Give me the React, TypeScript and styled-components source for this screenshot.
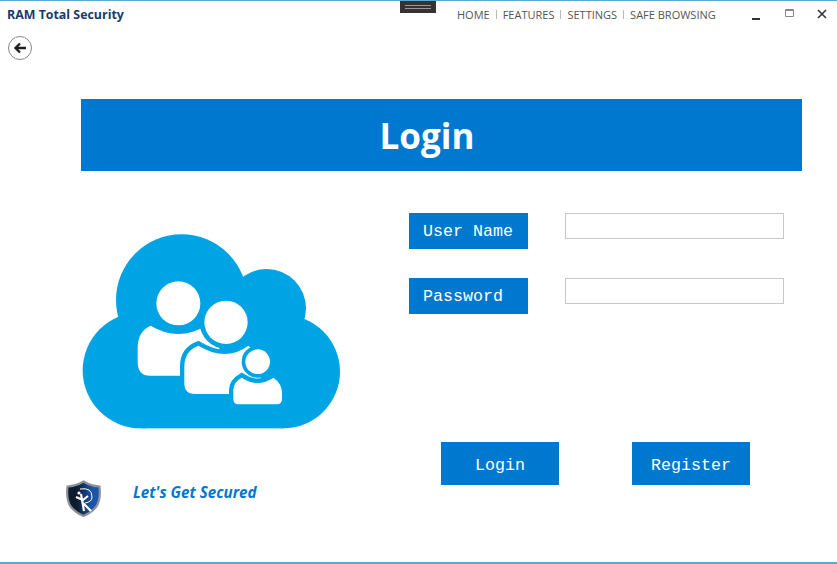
import React from 'react'
import styled, { createGlobalStyle } from 'styled-components'

const GlobalStyle = createGlobalStyle`
html, body {
  margin: 0;
  padding: 0;
  background: #fff;
}
`

const blue = '#0078cf'
const cloudBlue = '#00a4e4'

const Frame = styled.div`
  position: relative;
  box-sizing: border-box;
  width: 837px;
  height: 564px;
  overflow: hidden;
  background: #fff;
  border-top: 1px solid #5aa9d4;
  border-bottom: 2px solid #5aa9d4;
  font-family: "Open Sans", "Liberation Sans", sans-serif;
`

const TitleBar = styled.div`
  display: flex;
  align-items: center;
  height: 27px;
  padding-left: 7px;
`

const AppName = styled.div`
  width: 450px;
  font-size: 12.4px;
  font-weight: 700;
  color: #1a3a6b;
`

const Nav = styled.nav`
  display: flex;
  align-items: center;
  width: 285px;
  margin-top: -1px;
  font-size: 11px;
  color: #555;
`

const NavItem = styled.span`
  white-space: nowrap;
`

const NavSep = styled.span`
  width: 1px;
  height: 9px;
  margin: 0 6px;
  background: #bbb;
`

const WindowButtons = styled.div`
  display: flex;
  align-items: center;
  gap: 20px;
  margin-top: -2px;
  padding-left: 8px;
`

const GripHandle = styled.div`
  position: absolute;
  top: 0;
  left: 400px;
  width: 36px;
  height: 12px;
  background: #333;
  display: flex;
  align-items: center;
  justify-content: center;
  &::before {
    content: '';
    width: 26px;
    height: 2px;
    border-top: 1px solid #999;
    border-bottom: 1px solid #999;
  }
`

const BackRow = styled.div`
  box-sizing: border-box;
  height: 71px;
  padding: 8px 0 0 8px;
`

const BackButton = styled.button`
  display: flex;
  align-items: center;
  justify-content: center;
  box-sizing: border-box;
  width: 24px;
  height: 24px;
  padding: 0;
  border: 1px solid #888;
  border-radius: 50%;
  background: #fff;
`

const Banner = styled.h1`
  box-sizing: border-box;
  width: 721px;
  height: 72px;
  margin: 0 0 0 81px;
  padding-right: 29px;
  background: ${blue};
  color: #fff;
  font-size: 35px;
  font-weight: 700;
  line-height: 73px;
  text-align: center;
`

const Body = styled.div`
  display: flex;
`

const LeftColumn = styled.div`
  width: 409px;
  padding-top: 54px;
`

const CloudWrap = styled.div`
  padding-left: 70px;
  height: 210px;
`

const Tagline = styled.div`
  display: flex;
  align-items: center;
  gap: 31px;
  margin-top: 45px;
  padding-left: 65px;
`

const TaglineText = styled.span`
  padding-bottom: 14px;
  color: ${blue};
  font-size: 15.2px;
  font-weight: 700;
  font-style: italic;
`

const FormColumn = styled.div`
  flex: 1;
  padding-top: 42px;
`

const FieldRow = styled.div`
  display: flex;
  gap: 37px;
  margin-bottom: 29px;
`

const FieldLabel = styled.label`
  box-sizing: border-box;
  width: 119px;
  height: 36px;
  padding-left: 14px;
  background: ${blue};
  color: #fff;
  font-family: "Liberation Mono", monospace;
  font-size: 16.67px;
  line-height: 38px;
`

const TextBox = styled.input`
  box-sizing: border-box;
  width: 219px;
  height: 26px;
  border: 1px solid #c8c8c8;
  background: #fff;
  outline: none;
`

const Actions = styled.div`
  display: flex;
  gap: 73px;
  margin-top: 128px;
  padding-left: 32px;
`

const ActionButton = styled.button`
  width: 118px;
  height: 43px;
  padding: 4px 0 0;
  border: none;
  background: ${blue};
  color: #fff;
  font-family: "Liberation Mono", monospace;
  font-size: 16.67px;
`

const CloudArt = () => (
  <svg width="280" height="210" viewBox="0 0 840 630">
    <g fill={cloudBlue}>
      <circle cx="335" cy="225" r="197" />
      <circle cx="590" cy="250" r="118" />
      <circle cx="640" cy="440" r="170" />
      <circle cx="212" cy="436" r="174" />
      <rect x="212" y="300" width="430" height="310" />
    </g>
    <g fill="#fff" stroke={cloudBlue} paintOrder="stroke">
      <path strokeWidth="0" d="M242 302 Q325 352 408 302 Q450 320 450 400 L450 452 L240 452 Q203 452 203 410 L203 370 Q203 318 242 302 Z" />
      <circle cx="325" cy="235" r="66" strokeWidth="28" />
      <path strokeWidth="26" d="M385 362 Q468 412 535 362 Q572 390 572 440 L572 507 L375 507 Q343 507 343 475 L343 425 Q343 378 385 362 Z" />
      <circle cx="468" cy="292" r="65" strokeWidth="28" />
      <path strokeWidth="26" d="M515 458 Q563 490 610 458 Q636 475 636 505 L636 522 Q636 538 620 538 L505 538 Q490 538 490 522 L490 495 Q490 472 515 458 Z" />
      <circle cx="563" cy="410" r="37" strokeWidth="22" />
    </g>
  </svg>
)

const ShieldLogo = () => (
  <svg width="37" height="37" viewBox="0 0 37 37">
    <defs>
      <linearGradient id="shieldFill" x1="0" x2="1" y1="0" y2="0">
        <stop offset="0.3" stopColor="#0d1b2e" />
        <stop offset="0.75" stopColor="#1c55a8" />
      </linearGradient>
    </defs>
    <path d="M18.5 1.5 Q26 6 34.5 6.5 Q36 20 31 27 Q26 33 18.5 36 Q11 33 6 27 Q1 20 2.5 6.5 Q11 6 18.5 1.5 Z" fill="url(#shieldFill)" stroke="#8d9299" strokeWidth="2.2" />
    <g fill="none" stroke="#fff" strokeWidth="2.2">
      <path d="M16 14 L19 31" />
      <path d="M11 17 L18 20 L23 16" />
      <path d="M18 23 L26 31" />
      <circle cx="14" cy="13" r="1.6" fill="#fff" strokeWidth="0" />
    </g>
    <path d="M15 9 Q27 7 27 17 Q27 22 20 23" fill="none" stroke="#fff" strokeWidth="1" />
  </svg>
)

export default function App() {
  return (
    <>
      <GlobalStyle />
      <Frame>
        <TitleBar>
          <AppName>RAM Total Security</AppName>
          <Nav>
            <NavItem>HOME</NavItem>
            <NavSep />
            <NavItem>FEATURES</NavItem>
            <NavSep />
            <NavItem>SETTINGS</NavItem>
            <NavSep />
            <NavItem>SAFE BROWSING</NavItem>
          </Nav>
          <WindowButtons>
            <svg width="13" height="12" viewBox="0 0 13 12"><rect x="2" y="10" width="8" height="2" fill="#333" /></svg>
            <svg width="13" height="12" viewBox="0 0 13 12"><path d="M2.5 1.5h8v7h-8z M2.5 2.5h8" fill="none" stroke="#888" /></svg>
            <svg width="13" height="12" viewBox="0 0 13 12"><path d="M2 2l8 8M10 2l-8 8" fill="none" stroke="#333" strokeWidth="1.6" /></svg>
          </WindowButtons>
        </TitleBar>
        <GripHandle />
        <BackRow>
          <BackButton aria-label="Back">
            <svg width="14" height="14" viewBox="0 0 14 14">
              <path d="M13 7H3M7 2.5 2.5 7 7 11.5" fill="none" stroke="#222" strokeWidth="2.4" />
            </svg>
          </BackButton>
        </BackRow>
        <Banner>Login</Banner>
        <Body>
          <LeftColumn>
            <CloudWrap>
              <CloudArt />
            </CloudWrap>
            <Tagline>
              <ShieldLogo />
              <TaglineText>Let's Get Secured</TaglineText>
            </Tagline>
          </LeftColumn>
          <FormColumn>
            <FieldRow>
              <FieldLabel>User Name</FieldLabel>
              <TextBox />
            </FieldRow>
            <FieldRow>
              <FieldLabel>Password</FieldLabel>
              <TextBox type="password" />
            </FieldRow>
            <Actions>
              <ActionButton>Login</ActionButton>
              <ActionButton>Register</ActionButton>
            </Actions>
          </FormColumn>
        </Body>
      </Frame>
    </>
  )
}
